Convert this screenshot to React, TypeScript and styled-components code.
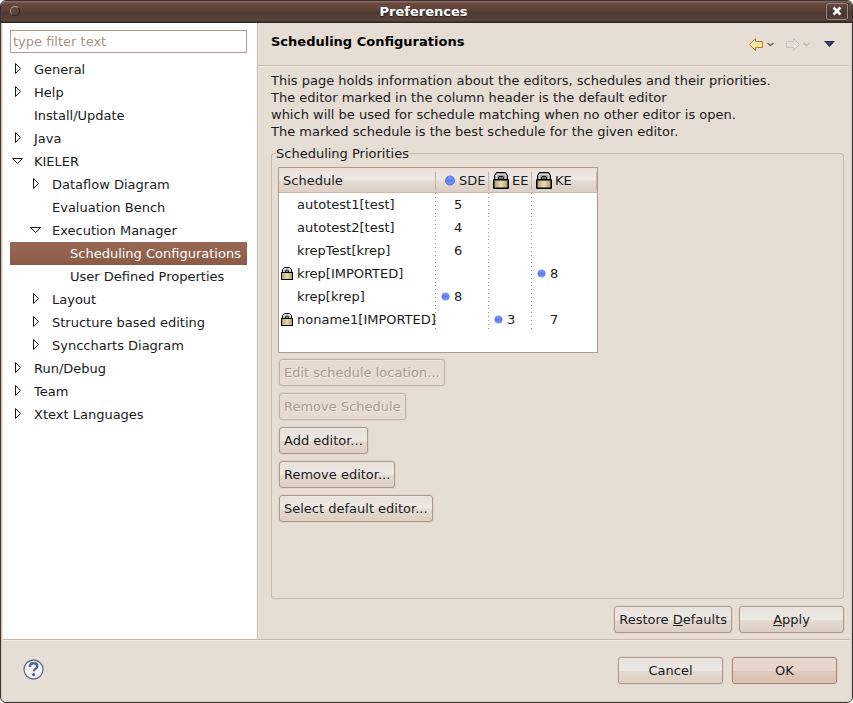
import React from "react";
import styled, { createGlobalStyle } from "styled-components";

const GlobalStyle = createGlobalStyle`
  * { box-sizing: border-box; }
  body {
    margin: 0;
    background: #f4f1ee;
    color: #1a1a1a;
    font-family: "DejaVu Sans", sans-serif;
    font-size: 13px;
    line-height: 17px;
  }
  button, input { font: inherit; color: inherit; margin: 0; }
`;

const line = "#c9b8a9";

const Window = styled.div`
  display: flex;
  flex-direction: column;
  min-height: 100vh;
  background: #e6ddd5;
  border: 1px solid #3c3330;
  border-radius: 6px;
  overflow: hidden;
`;

const TitleBar = styled.header`
  display: grid;
  grid-template-columns: 22px 1fr 22px;
  align-items: center;
  height: 22px;
  padding: 0 4px 2px;
  background: linear-gradient(#8b6b60 0, #8b6b60 1px, #6b4a40 2px, #614439 8px, #4c3b33 12px, #5a443a 20px, #2f2522 21px);
  color: #fff;
`;

const WindowDot = styled.button`
  width: 10px;
  height: 10px;
  margin-left: 5px;
  padding: 0;
  border: 1px solid;
  border-color: #b5a49c #2e231f #2a201c #a08e86;
  border-radius: 50%;
  background: #5b453c;
`;

const Title = styled.h1`
  margin: 0;
  padding-right: 6px;
  font-size: 13px;
  line-height: 17px;
  text-align: center;
  text-shadow: 0 1px 1px #2c211d;
`;

const CloseButton = styled.button`
  display: flex;
  align-items: center;
  justify-content: center;
  justify-self: end;
  width: 22px;
  height: 17px;
  padding: 0;
  border: 1px solid #9a8a82;
  border-radius: 2px;
  outline: 1px solid #33282480;
  background: linear-gradient(#654a40, #46362f 60%, #54413a);
`;

const Frame = styled.div`
  flex: 1;
  display: flex;
  flex-direction: column;
  border: solid #d9cbbf;
  border-width: 0 1px 1px;
  border-radius: 0 0 5px 5px;
  padding: 0 1px;
`;

const Main = styled.div`
  flex: 1;
  display: flex;
  border-bottom: 1px solid ${line};
`;

const Sidebar = styled.nav`
  flex: 0 0 255px;
  padding: 7px 10px 0 7px;
  background: #fff;
  border-right: 1px solid ${line};
`;

const Filter = styled.input`
  display: block;
  width: 100%;
  height: 23px;
  margin-bottom: 5px;
  padding: 0 2px;
  border: 1px solid #b09b88;
  background: #fff;
  &::placeholder { color: #a99686; opacity: 1; }
`;

const Tree = styled.ul`
  margin: 0;
  padding: 0;
  list-style: none;
`;

const TreeRow = styled.li<{ $level: number; $selected?: boolean }>`
  display: flex;
  align-items: center;
  height: 23px;
  padding-left: ${(p) => p.$level * 18}px;
  color: ${(p) => (p.$selected ? "#fff" : "inherit")};
  background: ${(p) => (p.$selected ? "linear-gradient(#9a6954, #8b5b47)" : "none")};
  white-space: nowrap;
`;

const Expander = styled.button`
  display: flex;
  width: 24px;
  height: 15px;
  align-items: flex-start;
  padding: 0 0 0 1px;
  border: 0;
  background: none;
`;

const Indent = styled.span`
  width: 24px;
`;

const Page = styled.main`
  flex: 1;
  display: flex;
  flex-direction: column;
  min-width: 0;
  box-shadow: inset 1px 0 #eee7e1;
`;

const PageHeader = styled.div`
  display: flex;
  align-items: center;
  justify-content: space-between;
  height: 43px;
  padding: 0 15px 0 13px;
  border-bottom: 1px solid ${line};
  box-shadow: 0 1px #f1ebe6;
`;

const PageTitle = styled.h2`
  margin: 0 0 6px;
  font-size: 13px;
  line-height: 17px;
  color: #000;
`;

const NavIcons = styled.div`
  display: flex;
  align-items: center;
`;

const IconButton = styled.button<{ $gap?: number }>`
  display: flex;
  margin-left: ${(p) => p.$gap ?? 0}px;
  padding: 0;
  border: 0;
  background: none;
`;

const PageBody = styled.div`
  flex: 1;
  display: flex;
  flex-direction: column;
  padding: 6px 6px 6px 13px;
`;

const Description = styled.p`
  margin: 0 0 5px;
  white-space: pre-line;
`;

const Group = styled.fieldset`
  flex: 1;
  min-width: 0;
  margin: 0;
  padding: 5px 6px 6px;
  border: 1px solid ${line};
  border-radius: 3px;
`;

const Legend = styled.legend`
  margin-left: -2px;
  padding: 0;
`;

const TableFrame = styled.div`
  width: 320px;
  min-height: 186px;
  border: 1px solid #b09b88;
  background: #fff;
`;

const Table = styled.table`
  width: 100%;
  table-layout: fixed;
  border-collapse: collapse;
`;

const HeadRow = styled.tr`
  height: 25px;
  background: linear-gradient(#e9e0d9, #efe9e4 45%, #e4dad1 55%, #dccfc4);
  box-shadow: inset 0 -1px #cdbcae;
`;

const Th = styled.th<{ $w?: number }>`
  width: ${(p) => (p.$w ? `${p.$w}px` : "auto")};
  padding: 0;
  font-weight: 400;
  text-align: left;
`;

const HeadCell = styled.div`
  display: flex;
  align-items: center;
  gap: 3px;
  height: 18px;
  padding-left: 4px;
  border-right: 1px solid #c5b5a7;
  white-space: nowrap;
`;

const Td = styled.td`
  height: 23px;
  padding: 0;
  &:not(:last-child) {
    background: repeating-linear-gradient(#999 0 1px, transparent 1px 4px) right top / 1px 100% no-repeat;
  }
`;

const Cell = styled.div`
  display: flex;
  align-items: center;
  white-space: nowrap;
`;

const Slot = styled.span<{ $pad: number }>`
  display: flex;
  flex: 0 0 18px;
  padding-left: ${(p) => p.$pad}px;
`;

const Stack = styled.div`
  display: flex;
  flex-direction: column;
  align-items: flex-start;
  gap: 7px;
  padding: 6px 1px;
`;

const Button = styled.button<{ $wide?: boolean; $primary?: boolean }>`
  height: 27px;
  min-width: ${(p) => (p.$wide ? 105 : 0)}px;
  padding: 0 4px 1px;
  border: 1px solid ${(p) => (p.$primary ? "#a08a7f" : "#ab998b")};
  border-radius: 3px;
  white-space: nowrap;
  box-shadow: 0 0 0 1px #e0d5cc, inset 0 1px #f3eeea66;
  background: ${(p) =>
    p.$primary
      ? "linear-gradient(#e8d5cb, #e8d6cd 50%, #dfc9bd 52%, #dcbfb0)"
      : "linear-gradient(#e9e1da, #eee8e3 50%, #e4dad2 52%, #dccfc4)"};
  &:disabled {
    color: #ab998a;
    text-shadow: 1px 1px #f3eee9;
    border-color: #c3b3a5;
    background: #e5dbd3;
  }
`;

const ActionRow = styled.div`
  display: flex;
  justify-content: flex-end;
  gap: 7px;
  padding-top: 7px;
`;

const Footer = styled.footer`
  display: flex;
  align-items: center;
  gap: 9px;
  height: 61px;
  padding: 0 13px 0 20px;
  box-shadow: inset 0 1px #f1ebe6;
`;

const HelpButton = styled.button`
  display: flex;
  margin-right: auto;
  padding: 0 0 2px;
  border: 0;
  background: none;
`;

const Triangle = ({ open }: { open?: boolean }) =>
  open ? (
    <svg width="13" height="13" viewBox="0 0 13 13" aria-hidden="true">
      <path d="M1.5 4.500h10l-5 5z" fill="#fff" stroke="#1a1a1a" />
    </svg>
  ) : (
    <svg width="13" height="13" viewBox="0 0 13 13" aria-hidden="true">
      <path d="M4.500 1.500v10l5-5z" fill="#fff" stroke="#1a1a1a" />
    </svg>
  );

const Brass = () => (
  <defs>
    <linearGradient id="brass">
      <stop offset="0" stopColor="#b59b62" />
      <stop offset="0.5" stopColor="#e6ddb4" />
      <stop offset="1" stopColor="#b0965c" />
    </linearGradient>
  </defs>
);

const Lock = ({ size }: { size: "small" | "large" }) =>
  size === "large" ? (
    <svg width="16" height="17" viewBox="0 0 16 17" aria-hidden="true">
      <Brass />
      <path d="M1.500 8V3.500l2-3h9l2 3V8z" fill="#8c8c8c" stroke="#000" />
      <path d="M3.500 8V3.500l1-1h7l1 1V8" fill="none" stroke="#d6d6d6" strokeWidth="1.500" />
      <path d="M5.500 8V5.500l1-1h3l1 1V8z" fill="#777" stroke="#000" />
      <rect x="0.750" y="7.750" width="14.500" height="8.500" rx="0.500" fill="url(#brass)" stroke="#000" strokeWidth="1.500" />
    </svg>
  ) : (
    <svg width="12" height="13" viewBox="0 0 12 13" aria-hidden="true">
      <Brass />
      <path d="M1.500 6V2.500l2-2h5l2 2V6z" fill="#d0d0d0" stroke="#000" />
      <path d="M4.500 6V4l1-1h1l1 1v2z" fill="#999" stroke="#000" />
      <rect x="0.500" y="5.500" width="11" height="7" fill="url(#brass)" stroke="#000" />
    </svg>
  );

const Dot = ({ head }: { head?: boolean }) => (
  <svg width={head ? 16 : 9} height={head ? 12 : 9} viewBox={head ? "0 0 16 12" : "0 0 9 9"} aria-hidden="true">
    <defs>
      <linearGradient id="dot" x2="0" y2="1">
        <stop offset="0" stopColor="#88a2f8" />
        <stop offset="0.5" stopColor="#5c7df0" />
        <stop offset="1" stopColor="#7f9dfa" />
      </linearGradient>
    </defs>
    {head ? (
      <circle cx="10" cy="5.500" r="4.500" fill="url(#dot)" stroke="#4f6bd8" />
    ) : (
      <circle cx="4.500" cy="4.500" r="4" fill="url(#dot)" />
    )}
  </svg>
);

const Arrow = ({ forward }: { forward?: boolean }) => (
  <svg width="15" height="13" viewBox="0 0 15 13" aria-hidden="true">
    <defs>
      <linearGradient id="gold" x2="0" y2="1">
        <stop offset="0" stopColor="#fffbe0" />
        <stop offset="1" stopColor="#f7d774" />
      </linearGradient>
    </defs>
    {forward ? (
      <path d="M14.500 6.500L8.500 0.500v3h-7v6h7v3z" fill="#e6dfd9" stroke="#cbc1b9" />
    ) : (
      <path d="M0.500 6.500L6.500 0.500v3h7v6h-7v3z" fill="url(#gold)" stroke="#b9811c" />
    )}
  </svg>
);

const Chevron = ({ color }: { color: string }) => (
  <svg width="7" height="5" viewBox="0 0 7 5" aria-hidden="true">
    <path d="M0.500 1l3 2.500 3-2.500" fill="none" stroke={color} strokeWidth="1.400" />
  </svg>
);

type Node = { label: string; level: number; state?: "open" | "closed"; selected?: boolean };

const nodes: Node[] = [
  { label: "General", level: 0, state: "closed" },
  { label: "Help", level: 0, state: "closed" },
  { label: "Install/Update", level: 0 },
  { label: "Java", level: 0, state: "closed" },
  { label: "KIELER", level: 0, state: "open" },
  { label: "Dataflow Diagram", level: 1, state: "closed" },
  { label: "Evaluation Bench", level: 1 },
  { label: "Execution Manager", level: 1, state: "open" },
  { label: "Scheduling Configurations", level: 2, selected: true },
  { label: "User Defined Properties", level: 2 },
  { label: "Layout", level: 1, state: "closed" },
  { label: "Structure based editing", level: 1, state: "closed" },
  { label: "Synccharts Diagram", level: 1, state: "closed" },
  { label: "Run/Debug", level: 0, state: "closed" },
  { label: "Team", level: 0, state: "closed" },
  { label: "Xtext Languages", level: 0, state: "closed" },
];

type Entry = { value: string; best?: boolean } | null;
type Schedule = { name: string; locked?: boolean; cells: Entry[] };

const schedules: Schedule[] = [
  { name: "autotest1[test]", cells: [{ value: "5" }, null, null] },
  { name: "autotest2[test]", cells: [{ value: "4" }, null, null] },
  { name: "krepTest[krep]", cells: [{ value: "6" }, null, null] },
  { name: "krep[IMPORTED]", locked: true, cells: [null, null, { value: "8", best: true }] },
  { name: "krep[krep]", cells: [{ value: "8", best: true }, null, null] },
  { name: "noname1[IMPORTED]", locked: true, cells: [null, { value: "3", best: true }, { value: "7" }] },
];

export default function App() {
  return (
    <>
      <GlobalStyle />
      <Window>
        <TitleBar>
          <WindowDot aria-label="Window menu" />
          <Title>Preferences</Title>
          <CloseButton aria-label="Close">
            <svg width="10" height="10" viewBox="0 0 10 10" aria-hidden="true">
              <path d="M1.500 1.500l7 7M8.500 1.500l-7 7" stroke="#fff" strokeWidth="2.600" />
            </svg>
          </CloseButton>
        </TitleBar>
        <Frame>
          <Main>
            <Sidebar>
              <Filter type="text" placeholder="type filter text" aria-label="Filter" />
              <Tree>
                {nodes.map((n) => (
                  <TreeRow key={n.label} $level={n.level} $selected={n.selected}>
                    {n.state ? (
                      <Expander aria-label={`Toggle ${n.label}`} aria-expanded={n.state === "open"}>
                        <Triangle open={n.state === "open"} />
                      </Expander>
                    ) : (
                      <Indent />
                    )}
                    {n.label}
                  </TreeRow>
                ))}
              </Tree>
            </Sidebar>
            <Page>
              <PageHeader>
                <PageTitle>Scheduling Configurations</PageTitle>
                <NavIcons>
                  <IconButton aria-label="Back"><Arrow /></IconButton>
                  <IconButton aria-label="Back history" $gap={3}><Chevron color="#6f635b" /></IconButton>
                  <IconButton aria-label="Forward" disabled $gap={11}><Arrow forward /></IconButton>
                  <IconButton aria-label="Forward history" disabled $gap={3}><Chevron color="#c4b8ae" /></IconButton>
                  <IconButton aria-label="View menu" $gap={14}>
                    <svg width="11" height="6" viewBox="0 0 11 6" aria-hidden="true">
                      <path d="M0 0h11L5.500 6z" fill="#23234a" />
                      <path d="M2 1h6L5.500 4z" fill="#45457c" />
                    </svg>
                  </IconButton>
                </NavIcons>
              </PageHeader>
              <PageBody>
                <Description>
                  {"This page holds information about the editors, schedules and their priorities.\nThe editor marked in the column header is the default editor\nwhich will be used for schedule matching when no other editor is open.\nThe marked schedule is the best schedule for the given editor."}
                </Description>
                <Group>
                  <Legend>Scheduling Priorities</Legend>
                  <TableFrame>
                    <Table>
                      <thead>
                        <HeadRow>
                          <Th $w={157}><HeadCell>Schedule</HeadCell></Th>
                          <Th $w={53}><HeadCell><Dot head />SDE</HeadCell></Th>
                          <Th $w={43}><HeadCell><Lock size="large" />EE</HeadCell></Th>
                          <Th><HeadCell><Lock size="large" />KE</HeadCell></Th>
                        </HeadRow>
                      </thead>
                      <tbody>
                        {schedules.map((s) => (
                          <tr key={s.name}>
                            <Td>
                              <Cell>
                                <Slot $pad={2}>{s.locked && <Lock size="small" />}</Slot>
                                {s.name}
                              </Cell>
                            </Td>
                            {s.cells.map((c, i) => (
                              <Td key={i}>
                                {c && (
                                  <Cell>
                                    <Slot $pad={5}>{c.best && <Dot />}</Slot>
                                    {c.value}
                                  </Cell>
                                )}
                              </Td>
                            ))}
                          </tr>
                        ))}
                      </tbody>
                    </Table>
                  </TableFrame>
                  <Stack>
                    <Button disabled>Edit schedule location...</Button>
                    <Button disabled>Remove Schedule</Button>
                    <Button>Add editor...</Button>
                    <Button>Remove editor...</Button>
                    <Button>Select default editor...</Button>
                  </Stack>
                </Group>
                <ActionRow>
                  <Button>Restore <u>D</u>efaults</Button>
                  <Button $wide><u>A</u>pply</Button>
                </ActionRow>
              </PageBody>
            </Page>
          </Main>
          <Footer>
            <HelpButton aria-label="Help">
              <svg width="21" height="21" viewBox="0 0 21 21" aria-hidden="true">
                <circle cx="10.500" cy="10.500" r="9.500" fill="#f3f3f3" stroke="#5c6f91" strokeWidth="1.300" />
                <path d="M6.800 8c0-2.600 1.700-3.700 3.800-3.700 2.200 0 3.700 1.200 3.700 3 0 2.500-3.500 2.600-3.500 5" fill="none" stroke="#52678e" strokeWidth="2.400" />
                <circle cx="10.600" cy="15.600" r="1.600" fill="#52678e" />
              </svg>
            </HelpButton>
            <Button $wide>Cancel</Button>
            <Button $wide $primary>OK</Button>
          </Footer>
        </Frame>
      </Window>
    </>
  );
}
